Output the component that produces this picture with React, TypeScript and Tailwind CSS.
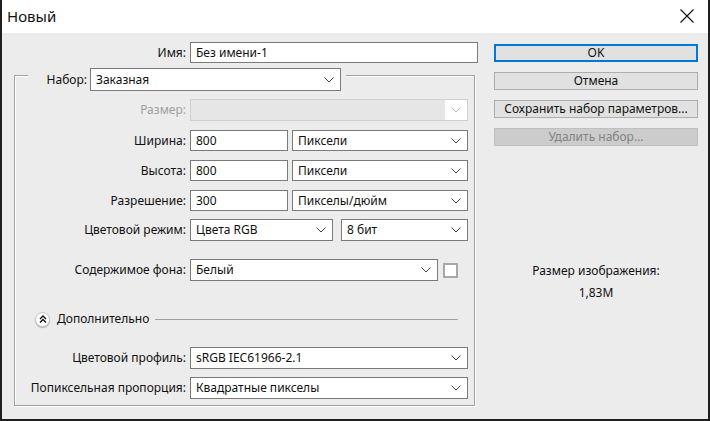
import React from "react";

const font = { fontFamily: '"Noto Sans", "Liberation Sans", sans-serif' };

function Chevron({ disabled }: { disabled?: boolean }) {
  return (
    <svg width="10" height="6" viewBox="0 0 10 6" className="shrink-0">
      <path d="M0.5 0.5 L5 5 L9.5 0.5" fill="none" stroke={disabled ? "#c4c4c4" : "#444"} strokeWidth="1" />
    </svg>
  );
}

function Select({ value, w, h = "h-[22px]" }: { value: string; w: string; h?: string }) {
  return (
    <div className={`${w} ${h} shrink-0 flex items-center justify-between bg-white border border-[#7a7a7a] pl-[5px] pr-[6px] text-[12px] text-[#111]`}>
      <span className="whitespace-nowrap">{value}</span>
      <Chevron />
    </div>
  );
}

function Input({ value, w }: { value: string; w: string }) {
  return (
    <div className={`${w} h-[21px] shrink-0 flex items-center bg-white border border-[#7a7a7a] pl-[5px] text-[12px] text-[#111]`}>
      <span className="whitespace-nowrap">{value}</span>
    </div>
  );
}

function Label({ text, disabled }: { text: string; disabled?: boolean }) {
  return (
    <div className={`w-[171px] shrink-0 text-right text-[12px] whitespace-nowrap ${disabled ? "text-[#a0a0a0]" : "text-[#111]"}`}>
      {text}
    </div>
  );
}

function Button({ text, kind }: { text: string; kind?: "default" | "disabled" }) {
  const cls =
    kind === "default"
      ? "border-2 border-[#0078d7] bg-[#e1e1e1] text-[#111]"
      : kind === "disabled"
      ? "border border-[#bfbfbf] bg-[#cccccc] text-[#838383]"
      : "border border-[#adadad] bg-[#e1e1e1] text-[#111]";
  return (
    <div className={`h-[18px] w-[204px] flex items-center justify-center text-[12px] leading-none ${cls}`}>
      {text}
    </div>
  );
}

export default function App() {
  return (
    <div style={font} className="w-[710px] h-[421px] bg-[#1f1f1f] pl-[2px] pr-[2px] pb-[2px] flex">
      <div className="flex-1 flex flex-col bg-[#ececec]">
        {/* Title bar */}
        <div className="h-[33px] bg-white flex items-center justify-between pl-[5px] pr-[14px]">
          <span className="text-[15px] text-[#111] -mt-[1px]">Новый</span>
          <svg width="14" height="14" viewBox="0 0 14 14" className="-mt-[1px]">
            <path d="M0.5 0.5 L13.5 13.5 M13.5 0.5 L0.5 13.5" stroke="#111" strokeWidth="1.1" />
          </svg>
        </div>

        {/* Body */}
        <div className="flex-1 flex">
          {/* Left column */}
          <div className="w-[478px] flex flex-col">
            <div className="flex items-center mt-[9px]">
              <div className="w-[184px] text-right text-[12px] text-[#111]">Имя:</div>
              <div className="ml-[4px]">
                <Input value="Без имени-1" w="w-[288px]" />
              </div>
            </div>

            {/* Group box */}
            <div className="ml-[12px] mt-[12px] w-[461px] border-l border-r border-b border-[#a0a0a0] shadow-[inset_1px_0_0_#fff,1px_1px_0_#fff] flex flex-col pb-[6px]">
              {/* legend row */}
              <div className="flex items-start -mt-[7px]">
                <div className="w-[13px] mt-[7px] border-t border-[#a0a0a0] shadow-[0_1px_0_#fff]" />
                <div className="w-[59px] h-[23px] flex items-center justify-end text-[12px] text-[#111]">Набор:</div>
                <div className="ml-[3px]">
                  <Select value="Заказная" w="w-[251px]" h="h-[23px]" />
                </div>
                <div className="flex-1 ml-[5px] mt-[7px] border-t border-[#a0a0a0] shadow-[0_1px_0_#fff]" />
              </div>

              {/* Размер */}
              <div className="flex items-center mt-[8px]">
                <Label text="Размер:" disabled />
                <div className="ml-[4px] w-[278px] h-[22px] flex border border-[#d0d0d0]">
                  <div className="flex-1 bg-[#e6e6e6]" />
                  <div className="w-[22px] bg-white flex items-center justify-center">
                    <Chevron disabled />
                  </div>
                </div>
              </div>

              {[
                ["Ширина:", "800", "Пиксели"],
                ["Высота:", "800", "Пиксели"],
                ["Разрешение:", "300", "Пикселы/дюйм"],
              ].map(([l, v, u]) => (
                <div key={l} className="flex items-center mt-[9px]">
                  <Label text={l} />
                  <div className="ml-[4px]">
                    <Input value={v} w="w-[98px]" />
                  </div>
                  <div className="ml-[4px]">
                    <Select value={u} w="w-[176px]" h="h-[21px]" />
                  </div>
                </div>
              ))}

              <div className="flex items-center mt-[8px]">
                <Label text="Цветовой режим:" />
                <div className="ml-[4px]">
                  <Select value="Цвета RGB" w="w-[143px]" />
                </div>
                <div className="ml-[8px]">
                  <Select value="8 бит" w="w-[127px]" />
                </div>
              </div>

              <div className="flex items-center mt-[18px]">
                <Label text="Содержимое фона:" />
                <div className="ml-[4px]">
                  <Select value="Белый" w="w-[248px]" />
                </div>
                <div className="ml-[5px] w-[15px] h-[15px] bg-white border-2 border-[#a8a8a8]" />
              </div>

              {/* Дополнительно */}
              <div className="flex items-center mt-[30px] h-[16px]">
                <div className="ml-[20px] w-[15px] h-[15px] rounded-full bg-white border border-[#c8c8c8] shadow-[0_1px_1px_rgba(0,0,0,0.25)] flex items-center justify-center">
                  <svg width="8" height="8" viewBox="0 0 8 8">
                    <path d="M1 4 L4 1 L7 4 M1 7.5 L4 4.5 L7 7.5" fill="none" stroke="#111" strokeWidth="1.4" />
                  </svg>
                </div>
                <span className="ml-[7px] text-[12px] text-[#111]">Дополнительно</span>
                <div className="flex-1 ml-[6px] mr-[16px] border-t border-[#a0a0a0]" />
              </div>

              <div className="flex items-center mt-[20px]">
                <Label text="Цветовой профиль:" />
                <div className="ml-[4px]">
                  <Select value="sRGB IEC61966-2.1" w="w-[278px]" />
                </div>
              </div>
              <div className="flex items-center mt-[8px]">
                <Label text="Попиксельная пропорция:" />
                <div className="ml-[4px]">
                  <Select value="Квадратные пикселы" w="w-[278px]" />
                </div>
              </div>
            </div>
          </div>

          {/* Right column */}
          <div className="ml-[14px] w-[204px] flex flex-col mt-[11px]">
            <Button text="OK" kind="default" />
            <div className="mt-[10px]"><Button text="Отмена" /></div>
            <div className="mt-[10px]"><Button text="Сохранить набор параметров..." /></div>
            <div className="mt-[10px]"><Button text="Удалить набор..." kind="disabled" /></div>
            <div className="mt-[117px] text-center text-[12px] text-[#111] leading-[16px]">Размер изображения:</div>
            <div className="mt-[6px] text-center text-[12px] text-[#111] leading-[16px]">1,83M</div>
          </div>
        </div>
      </div>
    </div>
  );
}
